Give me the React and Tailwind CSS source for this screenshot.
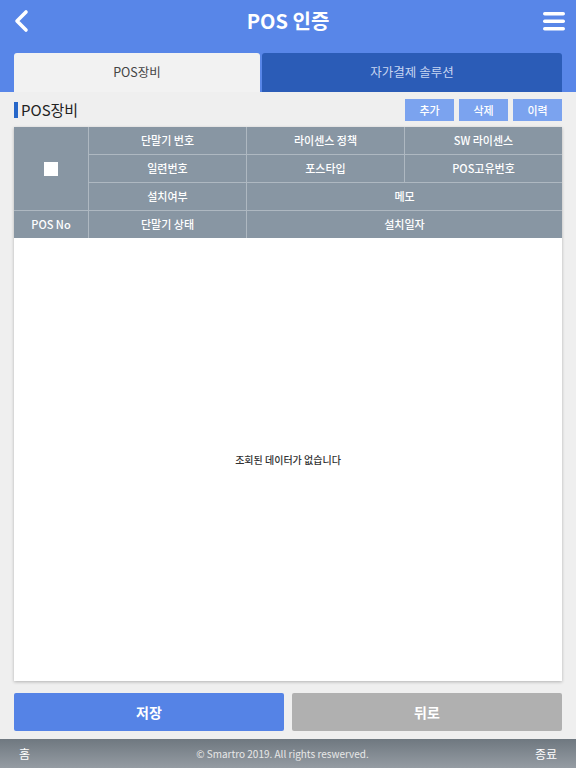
const FONT = { fontFamily: '"Noto Sans CJK KR", "Noto Sans", sans-serif' };

function HeadCell({ children, className = "" }) {
  return (
    <div className={`bg-[#8896a3] flex items-center justify-center text-white text-[11px] font-medium ${className}`}>
      {children}
    </div>
  );
}

export default function App() {
  return (
    <div style={FONT} className="w-[576px] h-[768px] flex flex-col bg-[#efefef] overflow-hidden">
      {/* Header */}
      <header className="bg-[#5886e8] h-[92px] flex flex-col">
        <div className="h-[42px] flex items-center justify-between pl-[10px] pr-[10px]">
          <svg width="24" height="28" viewBox="0 0 24 28">
            <path d="M16 5 L7 14 L16 23" fill="none" stroke="white" strokeWidth="3.6" strokeLinecap="round" strokeLinejoin="round" />
          </svg>
          <h1 className="text-white text-[20px] font-bold">POS 인증</h1>
          <svg width="24" height="24" viewBox="0 0 24 24">
            <rect x="1" y="3" width="22" height="3.4" rx="1.7" fill="white" />
            <rect x="1" y="10.5" width="22" height="3.4" rx="1.7" fill="white" />
            <rect x="1" y="18" width="22" height="3.4" rx="1.7" fill="white" />
          </svg>
        </div>
        <div className="flex-1 flex gap-[2px] px-[14px] pt-[11px]">
          <div className="w-[246px] bg-[#f2f2f2] rounded-t-[3px] flex items-center justify-center text-[12.5px] text-[#444]">
            POS장비
          </div>
          <div className="flex-1 bg-[#2b5cb7] rounded-t-[3px] flex items-center justify-center text-[12.5px] text-[#c7d6f2]">
            자가결제 솔루션
          </div>
        </div>
      </header>

      {/* Section title */}
      <div className="h-[35px] flex items-center justify-between px-[14px] pt-[1px]">
        <div className="flex items-center gap-[3px]">
          <span className="w-[4px] h-[16px] bg-[#2767c9]" />
          <span className="text-[15px] text-[#222]">POS장비</span>
        </div>
        <div className="flex gap-[5px]">
          {["추가", "삭제", "이력"].map((t) => (
            <button key={t} className="w-[49px] h-[22px] bg-[#7ba3ef] text-white text-[11px] font-medium">
              {t}
            </button>
          ))}
        </div>
      </div>

      {/* Table */}
      <div className="mx-[14px] flex-1 flex flex-col bg-white shadow-[0_1px_3px_rgba(0,0,0,0.25)]">
        <div className="grid grid-cols-[74px_1fr_1fr_1fr] grid-rows-[27px_27px_27px_27px] gap-px bg-[#aeb8c1]">
          <HeadCell className="row-span-3">
            <span className="w-[14px] h-[14px] bg-white" />
          </HeadCell>
          <HeadCell>단말기 번호</HeadCell>
          <HeadCell>라이센스 정책</HeadCell>
          <HeadCell>SW 라이센스</HeadCell>
          <HeadCell>일련번호</HeadCell>
          <HeadCell>포스타입</HeadCell>
          <HeadCell>POS고유번호</HeadCell>
          <HeadCell>설치여부</HeadCell>
          <HeadCell className="col-span-2">메모</HeadCell>
          <HeadCell>POS No</HeadCell>
          <HeadCell>단말기 상태</HeadCell>
          <HeadCell className="col-span-2">설치일자</HeadCell>
        </div>
        <div className="flex-1 flex items-center justify-center text-[10px] font-medium text-[#333]">
          조회된 데이터가 없습니다
        </div>
      </div>

      {/* Buttons */}
      <div className="flex gap-[8px] px-[14px] pt-[12px] pb-[8px]">
        <button className="flex-1 h-[38px] bg-[#5583e6] text-white text-[14px] font-bold rounded-[2px]">저장</button>
        <button className="flex-1 h-[38px] bg-[#b0b0b0] text-white text-[14px] font-bold rounded-[2px]">뒤로</button>
      </div>

      {/* Footer */}
      <footer className="h-[29px] flex items-center justify-between px-[19px] bg-gradient-to-b from-[#6f7880] to-[#959ca3] text-white">
        <span className="text-[12px]">홈</span>
        <span className="text-[10px] text-[#e8e8e8]">© Smartro 2019. All rights reswerved.</span>
        <span className="text-[12px]">종료</span>
      </footer>
    </div>
  );
}
